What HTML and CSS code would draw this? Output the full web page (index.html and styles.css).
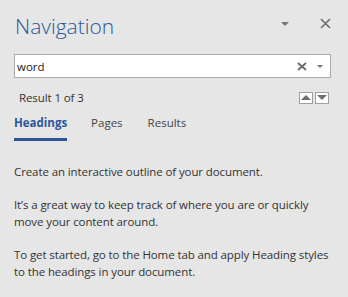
FILE: index.html
```html
<!DOCTYPE html>
<html lang="en">
	<head>
		<meta charset="UTF-8">
		<title>Navigation</title>
		<link rel="stylesheet" href="styles.css">
	</head>
	<body>
		<div class="pane">
			<div class="titlebar">
				<h1 class="title">Navigation</h1>
				<span class="menu-arrow"></span>
				<svg class="close" width="11" height="11" viewBox="0 0 11 11">
					<path d="M1 1L10 10M10 1L1 10" stroke="#6d6d6d" stroke-width="1.6"/>
				</svg>
			</div>
			<div class="search">
				<span class="search-text">word</span>
				<svg class="clear" width="10" height="9" viewBox="0 0 10 9">
					<path d="M1 1L9 8M9 1L1 8" stroke="#6a6a6a" stroke-width="1.8"/>
				</svg>
				<span class="search-arrow"></span>
			</div>
			<div class="result-row">
				<span class="result">Result 1 of 3</span>
				<div class="nav-buttons">
					<span class="nav-btn"><span class="up"></span></span>
					<span class="nav-btn"><span class="down"></span></span>
				</div>
			</div>
			<div class="tabs">
				<span class="tab active">Headings</span>
				<span class="tab">Pages</span>
				<span class="tab">Results</span>
			</div>
			<div class="body-text">
				<p>Create an interactive outline of your document.</p>
				<p>It’s a great way to keep track of where you are or quickly move your content around.</p>
				<p>To get started, go to the Home tab and apply Heading styles to the headings in your document.</p>
			</div>
		</div>
	</body>
</html>
```

FILE: styles.css
```css
body{
	margin:0;
	background:#e6e6e6;
	font-family:"Open Sans","Noto Sans",sans-serif;
	color:#333333;
}

.pane{
	width:348px;
	height:297px;
	padding:0 17px 0 14px;
	box-sizing:border-box;
}

/*标题栏*/
.titlebar{
	display:flex;
	align-items:center;
	height:50px;
	padding-top:2px;
	box-sizing:border-box;
}

.title{
	margin:0 0 0 1px;
	font-weight:300;
	font-size:21px;
	color:#2b579a;
	flex-grow:1;
}

.menu-arrow{
	width:0;
	height:0;
	border-left:4px solid transparent;
	border-right:4px solid transparent;
	border-top:4px solid #777777;
	margin-right:31px;
	margin-bottom:4px;
}

.close{
	margin-bottom:6px;
}

/*搜索框*/
.search{
	display:flex;
	align-items:center;
	height:24px;
	margin-top:4px;
	border:1px solid #ababab;
	background:#ffffff;
	box-sizing:border-box;
	padding:0 7px 0 2px;
}

.search-text{
	flex-grow:1;
	font-size:11.5px;
	color:#222222;
}

.clear{
	margin-right:10px;
}

.search-arrow{
	width:0;
	height:0;
	border-left:3px solid transparent;
	border-right:3px solid transparent;
	border-top:3px solid #777777;
}

.result-row{
	display:flex;
	align-items:center;
	justify-content:space-between;
	margin-top:13px;
	padding-left:5px;
	height:13px;
}

.result{
	font-size:11.5px;
	letter-spacing:-0.1px;
}

.nav-buttons{
	display:flex;
	gap:2px;
	margin-right:2px;
}

.nav-btn{
	width:14px;
	height:12px;
	border:1px solid #a0a0a0;
	background:#ffffff;
	display:flex;
	justify-content:center;
	align-items:center;
	box-sizing:border-box;
}

.up{
	border-left:5px solid transparent;
	border-right:5px solid transparent;
	border-bottom:5px solid #6d6d6d;
}

.down{
	border-left:5px solid transparent;
	border-right:5px solid transparent;
	border-top:5px solid #6d6d6d;
}

/*标签页*/
.tabs{
	display:flex;
	margin-top:11px;
}

.tab{
	font-size:11.5px;
	padding-bottom:8px;
	margin-right:25px;
	color:#444444;
}

.tab.active{
	color:#2b579a;
	font-weight:bold;
	border-bottom:3px solid #2b579a;
	margin-right:24px;
}

.body-text{
	margin-top:22px;
	margin-right:-8px;
	font-size:11.5px;
	letter-spacing:-0.1px;
	line-height:17px;
}

.body-text p{
	margin:0 0 16px 0;
}
```
